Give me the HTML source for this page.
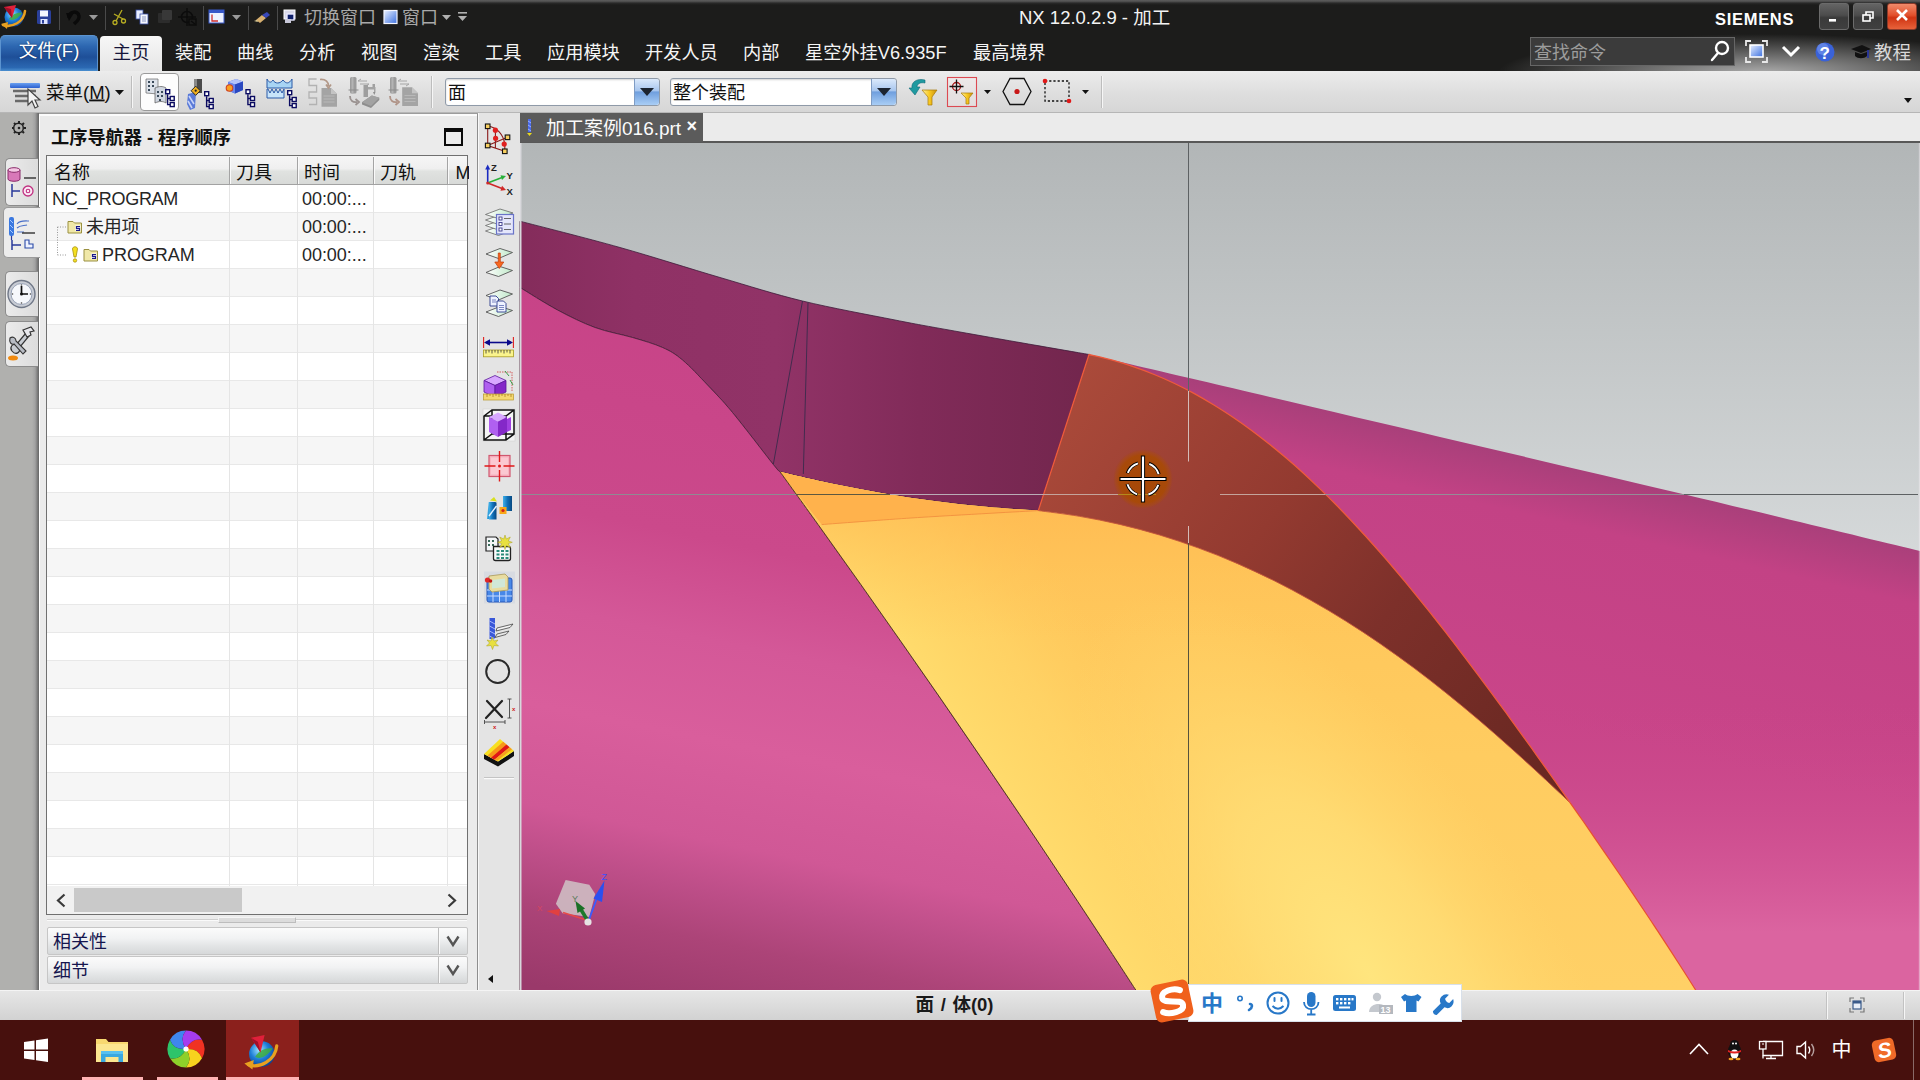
<!DOCTYPE html>
<html lang="zh-CN">
<head>
<meta charset="utf-8">
<title>NX 12.0.2.9 - 加工</title>
<style>
*{box-sizing:border-box;margin:0;padding:0}
html,body{width:1920px;height:1080px;overflow:hidden;background:#1b1b1b}
body{font-family:"Liberation Sans","Noto Sans CJK SC",sans-serif;position:relative;color:#222}
.abs{position:absolute}
svg{overflow:visible}
/* title bar */
#title{left:0;top:0;width:1920px;height:71px;background:#1c1c1b}
#topline{left:0;top:0;width:1920px;height:5px;background:linear-gradient(#5e5e5e,#4a4a4a 35%,#2a2a2a 60%,#1c1c1b)}
#glow{left:1400px;top:24px;width:520px;height:47px;overflow:hidden;background:radial-gradient(ellipse 265px 40px at 362px 50px,rgba(192,192,192,.9) 0,rgba(192,192,192,0) 100%)}
.tt{color:#f2f2f2;white-space:nowrap}
#apptitle{left:1019px;top:5px;font-size:18.5px;line-height:26px;color:#f4f4f4}
#siemens{left:1715px;top:8px;font-size:16.5px;line-height:22px;font-weight:bold;color:#fff;letter-spacing:.7px}
.wbtn{top:3px;height:27px;width:30px;border-radius:3px;border:1px solid #6b6b6b;background:linear-gradient(#646464,#4c4c4c 45%,#3a3a3a 55%,#404040)}
#filebtn{left:0;top:35px;width:98px;height:36px;border-radius:5px 5px 0 0;background:linear-gradient(#4a86c8,#2c66b0 30%,#1e4f98 60%,#2b68b2 90%,#4a8fd0);border:1px solid #5b93cf;border-bottom:none;color:#fff;font-size:18.5px;line-height:29px;text-align:center;text-shadow:0 0 2px rgba(0,0,30,.6)}
#hometab{left:100px;top:36px;width:62px;height:35px;border-radius:4px 4px 0 0;background:linear-gradient(#f7f7f7,#ececec 60%,#e6e6e6);color:#15153a;font-size:18.5px;line-height:34px;text-align:center}
.mi{top:36px;height:35px;line-height:34px;font-size:18.2px;color:#f5f5f5;white-space:nowrap}
#search{left:1530px;top:37px;width:205px;height:29px;background:#3b3b3b;border:1px solid #666;color:#9c9c9c;font-size:18px;line-height:30px;padding-left:3px}
/* toolbar */
#toolbar{left:0;top:71px;width:1920px;height:42px;background:linear-gradient(#ececec,#dedede 55%,#d6d6d6);border-bottom:1px solid #b6b6b6}
.sep{top:76px;width:2px;height:32px;background:linear-gradient(90deg,#bdbdbd 50%,#f6f6f6 50%)}
.combo{top:78px;height:28px;background:#fff;border:1px solid #8f9aa8;border-radius:3px;font-size:18px;line-height:28px;padding-left:2px;color:#111;box-shadow:inset 0 1px 2px rgba(0,0,0,.18)}
.combo i{position:absolute;right:0;top:0;width:25px;height:26px;border-left:1px solid #7f9cc4;border-radius:0 3px 3px 0;background:linear-gradient(#dbe9fb,#a8c6ee 45%,#6f9fde 50%,#a9cdf5)}
.combo i:after{content:"";position:absolute;left:5px;top:9px;border:7px solid transparent;border-top:8px solid #1c2430;border-bottom:none}
/* main */
#main{left:0;top:113px;width:1920px;height:877px;background:#e4e4e4}
#resbar{left:0;top:113px;width:39px;height:877px;background:linear-gradient(90deg,#b0b0ae 0,#b0b0ae 82%,#a2a2a2 90%,#7c7c7c 96%,#666 100%)}
#nav{left:39px;top:113px;width:439px;height:877px;background:#ebebeb;border-left:1.5px solid #fff;border-right:1px solid #8e8e8e}
#navtitle{left:51px;top:125px;font-size:18.2px;font-weight:bold;line-height:26px;color:#111;white-space:nowrap}
#tbl{left:46px;top:155px;width:422px;height:760px;background:#fff;border:1px solid #707070}
#vtb{left:478px;top:113px;width:42px;height:877px;background:#e4e4e4;border-left:1px solid #f8f8f8}
#tabstrip{left:520px;top:113px;width:1400px;height:30px;background:#ebebeb;border-bottom:2px solid #585858;z-index:2}
#doctab{left:520px;top:113px;width:183px;height:29px;z-index:3;background:#5b5b5b;color:#fbfbfb;font-size:19px;line-height:27px;white-space:nowrap}
/* status */
#status{left:0;top:990px;width:1920px;height:30px;background:linear-gradient(#e6e6e6,#dcdcdc 50%,#d2d2d2);border-top:1px solid #f4f4f4}
#stattext{left:915.5px;top:992px;font-size:18.5px;font-weight:bold;line-height:26px;word-spacing:1.5px;color:#1a1a1a;white-space:nowrap}
/* taskbar */
#taskbar{left:0;top:1020px;width:1920px;height:60px;background:#47100d}
.ul{top:1077px;height:3px;background:#ffb3b3}
</style>
</head>
<body>
<div id="title" class="abs"></div>
<div id="glow" class="abs"></div>
<div id="topline" class="abs"></div>
<!-- quick access icons -->
<svg class="abs" style="left:0;top:0" width="480" height="36" viewBox="0 0 480 36">
<defs>
<radialGradient id="nxg" cx="0.4" cy="0.35" r="0.7"><stop offset="0" stop-color="#8fe0ff"/><stop offset="0.5" stop-color="#1f7fd8"/><stop offset="1" stop-color="#0b3c8c"/></radialGradient>
<linearGradient id="blu" x1="0" y1="0" x2="1" y2="1"><stop offset="0" stop-color="#e8f0ff"/><stop offset="1" stop-color="#3a6fe0"/></linearGradient>
</defs>
<g id="nxlogo">
<circle cx="14" cy="17" r="9.5" fill="url(#nxg)"/>
<path d="M9 19 C12 14 18 12 22 13 C19 17 14 22 9 19Z" fill="#3fae3f" opacity=".85"/>
<polygon points="4,7 16,5 12,18" fill="#e0203a"/>
<polygon points="4,7 11,9 12,18" fill="#a01028"/>
<path d="M3 25 C12 28 24 22 25 11" fill="none" stroke="#e8a020" stroke-width="2.6" stroke-linecap="round"/>
<polygon points="1,24 8,22 7,29" fill="#e8a020"/>
</g>
<g><rect x="37" y="10" width="14" height="14" rx="1.5" fill="#2a3f9a"/><rect x="40" y="10.5" width="8" height="6" fill="#f4f6ff"/><rect x="40.5" y="19" width="7" height="5" fill="#dfe5ff"/><rect x="42" y="20" width="2" height="3.5" fill="#2a3f9a"/></g>
<path d="M59.5 6 V30 M105.5 6 V30 M203.5 6 V30 M248.5 6 V30 M277.5 6 V30" stroke="#4a4a4a" stroke-width="1"/>
<path d="M69 18 C69 11 78 10 79 16 C79.5 20 76 22 74 24" fill="none" stroke="#0a0a0a" stroke-width="3.4"/><polygon points="66,13 74,13 69,21" fill="#0a0a0a"/>
<polygon points="89,15 98,15 93.5,20" fill="#9a9a9a"/>
<g stroke="#b8ae22" stroke-width="1.300" fill="none"><path d="M122 10 L116 21 M114 14 L123 19"/><circle cx="115" cy="22.5" r="2"/><circle cx="123.5" cy="21" r="2"/></g>
<g><rect x="136" y="10" width="7" height="9" fill="#e8eeff" stroke="#3a50a8" stroke-width=".8"/><rect x="140" y="14" width="8" height="10" fill="#f4f7ff" stroke="#3a50a8" stroke-width=".8"/><path d="M142 17h4M142 19h4M142 21h4" stroke="#5a6aa8" stroke-width=".7"/></g>
<g fill="#2c2c2c"><rect x="158" y="13" width="12" height="10" rx="1"/><rect x="162" y="10" width="10" height="10" rx="1" fill="#383838"/></g>
<g stroke="#0c0c0c" stroke-width="1.5" fill="none"><circle cx="187" cy="17" r="5.5"/><path d="M187 8 V26 M178 17 H196"/><rect x="189" y="19" width="7" height="6" fill="#1c1c1b"/><path d="M191 21 l4 3"/></g>
<g><rect x="209" y="10" width="15" height="13" fill="#eef2ff" stroke="#3858c8" stroke-width="1"/><rect x="209" y="10" width="15" height="3" fill="#3858c8"/><path d="M212 14.5 V21 H218" stroke="#d03030" stroke-width="1.3" fill="none"/></g>
<polygon points="232,15 241,15 236.5,20" fill="#9a9a9a"/>
<g><path d="M256 20 L262 15 L266 18 L260 23Z" fill="#d8b070"/><path d="M262 15 L267 12 L270 15 L266 18Z" fill="#3848b8"/><path d="M254 21 l3 -1 l1 2z" fill="#e8d8a0"/></g>
<g><rect x="284" y="10" width="11" height="9" fill="#d8d8e8" stroke="#ffffff" stroke-width="1"/><rect x="287" y="14" width="7" height="6" fill="#10206a" stroke="#e8e8ff" stroke-width="1.4"/><rect x="285" y="19" width="6" height="4" fill="#c8c8d8"/></g>
<text x="304" y="24" font-family="Liberation Sans, Noto Sans CJK SC, sans-serif" font-size="18" fill="#a9a9a9">切换窗口</text>
<g><rect x="384" y="10.5" width="13" height="13" fill="url(#blu)" stroke="#f4f6ff" stroke-width="1.2"/></g>
<text x="402" y="24" font-family="Liberation Sans, Noto Sans CJK SC, sans-serif" font-size="18" fill="#a9a9a9">窗口</text>
<polygon points="442,15 451,15 446.5,20" fill="#b0b0b0"/>
<polygon points="458,16 467,16 462.5,21" fill="#b0b0b0"/><rect x="458" y="12" width="9" height="1.6" fill="#b0b0b0"/>
</svg>
<div id="apptitle" class="abs tt">NX 12.0.2.9 - 加工</div>
<div id="siemens" class="abs tt">SIEMENS</div>
<div class="abs wbtn" style="left:1819px"></div>
<div class="abs wbtn" style="left:1853px"></div>
<div class="abs wbtn" style="left:1887px;background:linear-gradient(#f08a6a,#e2502c 45%,#cf3413 55%,#e8623a);border-color:#8a3a2a"></div>
<svg class="abs" style="left:1819px;top:3px" width="100" height="27" viewBox="0 0 100 27">
<rect x="10" y="16" width="7" height="2.6" fill="#fff"/>
<g fill="none" stroke="#fff" stroke-width="1.6"><rect x="44" y="12" width="7" height="6"/><path d="M47 12 V9 H54 V15 H51"/></g>
<path d="M78 7 L88 17 M88 7 L78 17" stroke="#fff" stroke-width="2.6"/>
</svg>
<div id="filebtn" class="abs">文件(F)</div>
<div id="hometab" class="abs">主页</div>
<div class="abs mi" style="left:175px">装配</div>
<div class="abs mi" style="left:237px">曲线</div>
<div class="abs mi" style="left:299px">分析</div>
<div class="abs mi" style="left:361px">视图</div>
<div class="abs mi" style="left:423px">渲染</div>
<div class="abs mi" style="left:485px">工具</div>
<div class="abs mi" style="left:547px">应用模块</div>
<div class="abs mi" style="left:645px">开发人员</div>
<div class="abs mi" style="left:743px">内部</div>
<div class="abs mi" style="left:805px">星空外挂V6.935F</div>
<div class="abs mi" style="left:973px">最高境界</div>
<div id="search" class="abs">查找命令</div>
<svg class="abs" style="left:1700px;top:36px" width="220" height="34" viewBox="1700 36 220 34">
<g fill="none" stroke="#fff" stroke-width="2.4"><circle cx="1722" cy="48" r="6"/><path d="M1718 53 L1712 60" stroke-linecap="round"/></g>
<g><rect x="1750" y="45" width="13" height="12" fill="url(#blu)" stroke="#fff" stroke-width="1.6"/><path d="M1746 46 V41 H1751 M1762 41 H1767 V46 M1767 57 V62 H1762 M1751 62 H1746 V57" fill="none" stroke="#e8e8e8" stroke-width="1.8"/></g>
<path d="M1783 47 L1791 55 L1799 47" fill="none" stroke="#fff" stroke-width="3"/>
<circle cx="1825" cy="52" r="9.5" fill="#3a62d8"/><circle cx="1823" cy="49" r="6" fill="#7a9af0" opacity=".6"/>
<text x="1819.5" y="58.5" font-family="Liberation Sans, sans-serif" font-weight="bold" font-size="17" fill="#fff">?</text>
<g><polygon points="1851,49 1862,45 1871,49 1861,53" fill="#111"/><path d="M1855 52 V56 C1858 59 1864 59 1867 56 V52 L1861 54Z" fill="#111"/><path d="M1868 50 V58" stroke="#2030a8" stroke-width="1.6"/></g>
<text x="1874" y="59" font-family="Liberation Sans, Noto Sans CJK SC, sans-serif" font-size="18.5" fill="#d8d8d8">教程</text>
</svg>
<div id="toolbar" class="abs"></div>
<div class="abs sep" style="left:131px"></div>
<div class="abs sep" style="left:431px"></div>
<div class="abs sep" style="left:1101px"></div>
<div class="abs" style="left:140px;top:73px;width:39px;height:38px;background:#fdfdfd;border:1px solid #9a9a9a;border-radius:4px"></div>
<svg class="abs" style="left:0;top:71px" width="440" height="42" viewBox="0 71 440 42">
<defs>
<linearGradient id="mg" x1="0" y1="0" x2="0" y2="1"><stop offset="0" stop-color="#6aa0f0"/><stop offset="1" stop-color="#2a5fd0"/></linearGradient>
<g id="tree" fill="#fff" stroke="#0a0a60" stroke-width="1.6" transform="scale(.87)"><path d="M3 6 V18 H6 M3 11 H6" fill="none"/><rect x="0.8" y="0.8" width="4.6" height="4.6"/><rect x="6" y="8.6" width="4.6" height="4.6"/><rect x="6" y="15.6" width="4.6" height="4.6"/></g>
</defs>
<!-- menu icon -->
<g><rect x="10" y="83" width="30" height="5" rx="1" fill="url(#mg)"/><path d="M13 91 H36 M15 96 H36 M15 101 H30" stroke="#6a6a6a" stroke-width="2.4"/><path d="M28 89 L28 105 L32 101 L35 108 L38 106.5 L35 100 L40 100Z" fill="#f4f4f4" stroke="#444" stroke-width="1.2"/></g>
<text x="46" y="98.5" font-family="Liberation Sans, Noto Sans CJK SC, sans-serif" font-size="18.5" fill="#111">菜单(<tspan text-decoration="underline">M</tspan>)</text>
<polygon points="115,90 124,90 119.5,95" fill="#111"/>
<!-- icon1 -->
<g><path d="M146 79 L158 79 L158 94 L146 93Z" fill="#dde2ea" stroke="#777" stroke-width=".8"/><path d="M155 88 C159 86 163 86 166 88 L166 103 C163 101 159 101 155 103Z" fill="#d0d6e0" stroke="#666" stroke-width=".8"/><g fill="#3a4a5a"><rect x="148" y="81" width="2" height="2"/><rect x="152" y="81" width="2" height="2"/><rect x="148" y="85" width="2" height="2"/><rect x="152" y="85" width="2" height="2"/><rect x="148" y="89" width="2" height="2"/><rect x="157" y="91" width="2" height="2"/><rect x="161" y="91" width="2" height="2"/><rect x="157" y="95" width="2" height="2"/><rect x="161" y="95" width="2" height="2"/><rect x="159" y="99" width="2" height="2"/></g><use href="#tree" x="165" y="89"/></g>
<!-- icon2 drill -->
<g><rect x="194" y="79" width="8" height="14" fill="#4a4a4a"/><rect x="194" y="79" width="3" height="14" fill="#888"/><path d="M188 94 L196 92 L195 108 L190 110 L187 104Z" fill="#5a7ad8"/><path d="M189 96 L194 104 M188 101 L192 108" stroke="#c8d4f8" stroke-width="1.6"/><rect x="192.5" y="87.5" width="6.5" height="6.5" transform="rotate(45 195.7 90.7)" fill="#f0b020" stroke="#222" stroke-width=".9"/><circle cx="195.7" cy="90.7" r="1.1" fill="#222"/><use href="#tree" x="204" y="91"/></g>
<!-- icon3 cube -->
<g><path d="M228 82 L236 79 L243 81.500 L243 90 L235 93.500 L228 90.500Z" fill="#4a6ae0"/><path d="M228 82 L236 79 L243 81.500 L235 84.500Z" fill="#b4c4fa"/><path d="M235 84.500 L243 81.500 L243 90 L235 93.500Z" fill="#2a48c0"/><path d="M228 82 L235 84.500 L235 93.500 L228 90.500Z" fill="#6a86ec"/><circle cx="229.500" cy="88" r="3.300" fill="#f8a020" stroke="#d04020" stroke-width="1.100"/><use href="#tree" x="245.300" y="89"/></g>
<!-- icon4 wave -->
<g><path d="M267 79 V88 H292 V79 C289 84 286 84 283 80 C280 84 275 84 273 80 C271 83 269 83 267 79Z" fill="#a8d4f4" stroke="#2a5aa8" stroke-width="1"/><path d="M267 89 V98 H284 V89 L282 93 L280 89 L278 93 L276 89 L274 93 L272 89 L270 93 L268 89Z" fill="#c8e4fa" stroke="#2a5aa8" stroke-width="1"/><use href="#tree" x="287" y="90"/></g>
<!-- gray icons -->
<g>
<path d="M316.600 79 H309 V85.500 H316.600 V92 H309 V98 H316.600 V104.500 H309" fill="none" stroke="#b2b2b2" stroke-width="1.300"/>
<path d="M321.500 88 H331 L337 94 V106.800 H321.500Z" fill="#a4a4a4"/><path d="M331 88 V94 H337Z" fill="#c4c4c4"/>
<path d="M323.500 96 h11 M323.500 99 h11 M323.500 102 h11" stroke="#b8b8b8" stroke-width="1"/>
<path d="M320 79.500 C326 79 328.500 82 328.500 86 M326 84.500 L328.500 88 L331 84.500" fill="none" stroke="#b29888" stroke-width="1.700"/>
<rect x="350" y="77" width="6.500" height="16.500" rx="1.500" fill="#9c9c9c"/><rect x="351.500" y="77" width="2" height="16.500" fill="#b4b4b4"/>
<path d="M348.500 90 h10" stroke="#8c8c8c" stroke-width="1"/>
<path d="M358 81 l3 -2 M358 81 h9 M360 84 h9 M369 84 l-3 2" stroke="#a6a6a6" stroke-width="1" fill="none"/>
<rect x="363.500" y="85" width="4.500" height="12" fill="#9e9e9e"/><path d="M368 87 H375.500 V92 H374 V89.500 H368Z" fill="#a4a4a4"/><rect x="372.500" y="84" width="2.500" height="3" fill="#a0a0a0"/><path d="M373 92 h2.500 l-1.200 3z" fill="#8c8c8c"/>
<polygon points="362,102.300 371.800,95.500 379.300,97.800 379.300,100 371,108 362,104.500" fill="#8e8e8e"/><polygon points="362,102.300 371.800,95.500 379.300,97.800 371,106" fill="#a2a2a2"/>
<path d="M350 96 C350 101 353 102.500 357 102 M355.500 99 L359 102 L355.500 105" fill="none" stroke="#9a9290" stroke-width="1.800"/>
<rect x="390" y="77" width="6.500" height="16.500" rx="1.500" fill="#9c9c9c"/><rect x="391.500" y="77" width="2" height="16.500" fill="#b4b4b4"/>
<path d="M388.500 90 h10" stroke="#8c8c8c" stroke-width="1"/>
<path d="M398 81 l3 -2 M398 81 h9 M400 84 h9 M409 84 l-3 2" stroke="#a6a6a6" stroke-width="1" fill="none"/>
<path d="M402.200 87.300 H412 L418 93.300 V106 H402.200Z" fill="#a4a4a4"/><path d="M412 87.300 V93.300 H418Z" fill="#c4c4c4"/>
<path d="M404.500 95.500 h11 M404.500 98.500 h11 M404.500 101.500 h11" stroke="#b8b8b8" stroke-width="1"/>
<path d="M390 96 C390 101 393 102.500 397 102 M395.500 99 L399 102 L395.500 105" fill="none" stroke="#b09488" stroke-width="1.800"/>
</g>
</svg>
<div class="abs combo" style="left:445px;width:215px">面<i></i></div>
<div class="abs combo" style="left:670px;width:227px">整个装配<i></i></div>
<svg class="abs" style="left:900px;top:71px" width="220" height="42" viewBox="900 71 220 42">
<defs><linearGradient id="fun" x1="0" y1="0" x2="1" y2="0"><stop offset="0" stop-color="#fff2a0"/><stop offset=".5" stop-color="#f8c820"/><stop offset="1" stop-color="#c89010"/></linearGradient></defs>
<path d="M925 80 C917 78 911 82 912 88 L909 88 L915 95 L920 87 L917 87 C917 84 920 82 925 83Z" fill="#1f9aa0" stroke="#0f6a78" stroke-width=".6"/>
<path d="M922 90 H937 L932 97 V105 L928 105 V97Z" fill="url(#fun)" stroke="#a87808" stroke-width=".7"/>
<rect x="947.500" y="77.500" width="29" height="29" fill="rgba(255,240,240,.25)" stroke="#dc4a52" stroke-width="1.100"/>
<g stroke-width="1.300" fill="none"><circle cx="956.500" cy="86.500" r="4" stroke="#a81818"/><path d="M956.500 79.500 V93.500 M949.500 86.500 H963.500" stroke="#111"/></g>
<path d="M961 93 H973 L969 98 V104 L966 104 V98Z" fill="url(#fun)" stroke="#a87808" stroke-width=".7"/>
<polygon points="984,90 991,90 987.5,94" fill="#111"/>
<polygon points="1003,91.500 1010,78.500 1024,78.500 1031,91.500 1024,104.500 1010,104.500" fill="none" stroke="#111" stroke-width="1.300"/><circle cx="1017" cy="91.500" r="2.600" fill="#c81818"/>
<rect x="1045" y="81" width="24" height="20" fill="none" stroke="#111" stroke-width="1.300" stroke-dasharray="2.200 2"/><circle cx="1045" cy="81" r="2.300" fill="#e01818"/><circle cx="1069" cy="101" r="2.300" fill="#e01818"/>
<polygon points="1082,90 1089,90 1085.5,94" fill="#111"/>
</svg>
<svg class="abs" style="left:1901px;top:95.5px" width="14" height="10"><polygon points="3,2 11,2 7,7" fill="#111"/></svg>
<div id="main" class="abs"></div>
<div id="resbar" class="abs"></div>
<div id="nav" class="abs"></div>
<div class="abs" style="left:5px;top:158px;width:33px;height:48px;background:linear-gradient(90deg,#ebebeb,#dcdcdc);border:1px solid #8c8c8c;border-right:none;border-radius:5px 0 0 5px"></div>
<div class="abs" style="left:3px;top:207px;width:37px;height:51px;background:#ececec;border:1px solid #9a9a9a;border-right:none;border-radius:5px 0 0 5px"></div>
<div class="abs" style="left:5px;top:271px;width:33px;height:46px;background:linear-gradient(90deg,#ebebeb,#dcdcdc);border:1px solid #8c8c8c;border-right:none;border-radius:5px 0 0 5px"></div>
<div class="abs" style="left:5px;top:321px;width:33px;height:46px;background:linear-gradient(90deg,#ebebeb,#dcdcdc);border:1px solid #8c8c8c;border-right:none;border-radius:5px 0 0 5px"></div>
<svg class="abs" style="left:0;top:113px" width="40" height="260" viewBox="0 113 40 260">
<g fill="none" stroke="#222" stroke-width="1.5"><circle cx="18.500" cy="128" r="4.800"/><path d="M19 121 v2 M19 133 v2 M12 128 h2 M24 128 h2 M14 123 l1.500 1.500 M22.500 131.500 l1.500 1.500 M24 123 l-1.500 1.500 M15.500 131.500 l-1.500 1.500" stroke-width="2"/></g>
<circle cx="19" cy="128" r="1.300" fill="#222"/>
<!-- tab1 -->
<g><path d="M8 170 V179 C8 182 20 182 20 179 V170Z" fill="#d878b8" stroke="#8a2a6a" stroke-width="1"/><ellipse cx="14" cy="170" rx="6" ry="2.300" fill="#f4c8e4" stroke="#8a2a6a" stroke-width="1"/><path d="M24 178 H36" stroke="#222" stroke-width="1.300"/><path d="M12 184 V197 M12 191 H20" stroke="#2a3a9a" stroke-width="1.500" fill="none"/><circle cx="28" cy="191" r="5" fill="#fbe8f4" stroke="#c03080" stroke-width="1.300"/><circle cx="28" cy="191" r="1.800" fill="none" stroke="#c03080" stroke-width="1.100"/></g>
<!-- tab2 -->
<g><rect x="9" y="217" width="5" height="19" rx="2" fill="#3a78e0"/><path d="M10 220 l3 3 M10 225 l3 3 M10 230 l3 3" stroke="#a8c8ff" stroke-width="1"/><path d="M11.500 236 V240" stroke="#2a3a9a" stroke-width="1.200"/><path d="M17 224 C20 220 26 221 29 221 M17 228 C20 225 24 226 27 225 M17 232 H24" stroke="#4a70c8" stroke-width="1.100" fill="none"/><path d="M22 233 H35" stroke="#222" stroke-width="1.300"/><path d="M12 240 V250 M12 245 H21" stroke="#2a3a9a" stroke-width="1.500" fill="none"/><path d="M25 240 H29 V244 H33 V248 H25Z" fill="#eef2ff" stroke="#2a4aa8" stroke-width="1.100"/></g>
<!-- clock -->
<g><circle cx="21.500" cy="294" r="13.500" fill="#c8ccd4" stroke="#707888" stroke-width="1.400"/><circle cx="21.500" cy="294" r="10.500" fill="#f6f8fc" stroke="#9aa4b8" stroke-width="1"/><path d="M21.500 294 V286 M21.500 294 H28" stroke="#111" stroke-width="1.700"/><circle cx="21.500" cy="294" r="1.500" fill="#111"/><g fill="#444"><circle cx="21.500" cy="285" r=".8"/><circle cx="21.500" cy="303" r=".8"/><circle cx="12.500" cy="294" r=".8"/><circle cx="30.500" cy="294" r=".8"/></g></g>
<!-- tools -->
<g><path d="M12 351 C9 347 13 343 16 345 L26 333 L29 336 L19 348 C21 352 16 356 12 351Z" fill="#c8ccd2" stroke="#333" stroke-width="1.200"/><path d="M23 330 L31 327 L34 331 L30 332 L31 335 L27 337Z" fill="#e8e8ec" stroke="#333" stroke-width="1.200"/><path d="M10 338 C13 336 16 338 16 341 L26 351 L23 354 L14 344 C11 345 9 342 10 338Z" fill="#b8bcc4" stroke="#333" stroke-width="1.100"/><ellipse cx="13" cy="358" rx="5" ry="2.500" fill="#f08a10"/></g>
</svg>
<div id="navtitle" class="abs">工序导航器 - 程序顺序</div>
<div class="abs" style="left:444px;top:128px;width:19px;height:18px;border:2px solid #0a0a0a;border-top-width:4.5px"></div>
<div class="abs" style="left:39px;top:113px;width:439px;height:1px;background:#9c9c9c"></div>
<div class="abs" style="left:40px;top:114px;width:437px;height:1.5px;background:#fbfbfb"></div>
<div id="tbl" class="abs"></div>
<div class="abs" style="left:47px;top:156px;width:420px;height:29px;background:linear-gradient(#f6f6f6,#efefef 45%,#e0e2e0 55%,#d8dad8);border-bottom:1px solid #a2a2a2"></div>
<div class="abs" style="left:47px;top:185px;width:420px;height:28px;background:#ffffff;border-bottom:1px solid #e8e8e8"></div>
<div class="abs" style="left:47px;top:213px;width:420px;height:28px;background:#f6f6f6;border-bottom:1px solid #e8e8e8"></div>
<div class="abs" style="left:47px;top:241px;width:420px;height:28px;background:#ffffff;border-bottom:1px solid #e8e8e8"></div>
<div class="abs" style="left:47px;top:269px;width:420px;height:28px;background:#f6f6f6;border-bottom:1px solid #e8e8e8"></div>
<div class="abs" style="left:47px;top:297px;width:420px;height:28px;background:#ffffff;border-bottom:1px solid #e8e8e8"></div>
<div class="abs" style="left:47px;top:325px;width:420px;height:28px;background:#f6f6f6;border-bottom:1px solid #e8e8e8"></div>
<div class="abs" style="left:47px;top:353px;width:420px;height:28px;background:#ffffff;border-bottom:1px solid #e8e8e8"></div>
<div class="abs" style="left:47px;top:381px;width:420px;height:28px;background:#f6f6f6;border-bottom:1px solid #e8e8e8"></div>
<div class="abs" style="left:47px;top:409px;width:420px;height:28px;background:#ffffff;border-bottom:1px solid #e8e8e8"></div>
<div class="abs" style="left:47px;top:437px;width:420px;height:28px;background:#f6f6f6;border-bottom:1px solid #e8e8e8"></div>
<div class="abs" style="left:47px;top:465px;width:420px;height:28px;background:#ffffff;border-bottom:1px solid #e8e8e8"></div>
<div class="abs" style="left:47px;top:493px;width:420px;height:28px;background:#f6f6f6;border-bottom:1px solid #e8e8e8"></div>
<div class="abs" style="left:47px;top:521px;width:420px;height:28px;background:#ffffff;border-bottom:1px solid #e8e8e8"></div>
<div class="abs" style="left:47px;top:549px;width:420px;height:28px;background:#f6f6f6;border-bottom:1px solid #e8e8e8"></div>
<div class="abs" style="left:47px;top:577px;width:420px;height:28px;background:#ffffff;border-bottom:1px solid #e8e8e8"></div>
<div class="abs" style="left:47px;top:605px;width:420px;height:28px;background:#f6f6f6;border-bottom:1px solid #e8e8e8"></div>
<div class="abs" style="left:47px;top:633px;width:420px;height:28px;background:#ffffff;border-bottom:1px solid #e8e8e8"></div>
<div class="abs" style="left:47px;top:661px;width:420px;height:28px;background:#f6f6f6;border-bottom:1px solid #e8e8e8"></div>
<div class="abs" style="left:47px;top:689px;width:420px;height:28px;background:#ffffff;border-bottom:1px solid #e8e8e8"></div>
<div class="abs" style="left:47px;top:717px;width:420px;height:28px;background:#f6f6f6;border-bottom:1px solid #e8e8e8"></div>
<div class="abs" style="left:47px;top:745px;width:420px;height:28px;background:#ffffff;border-bottom:1px solid #e8e8e8"></div>
<div class="abs" style="left:47px;top:773px;width:420px;height:28px;background:#f6f6f6;border-bottom:1px solid #e8e8e8"></div>
<div class="abs" style="left:47px;top:801px;width:420px;height:28px;background:#ffffff;border-bottom:1px solid #e8e8e8"></div>
<div class="abs" style="left:47px;top:829px;width:420px;height:28px;background:#f6f6f6;border-bottom:1px solid #e8e8e8"></div>
<div class="abs" style="left:47px;top:857px;width:420px;height:28px;background:#ffffff;border-bottom:1px solid #e8e8e8"></div>
<div class="abs" style="left:229px;top:157px;width:1px;height:27px;background:#a4a4a4;box-shadow:1px 0 0 #fafafa"></div>
<div class="abs" style="left:229px;top:185px;width:1px;height:701px;background:#e5e5e5"></div>
<div class="abs" style="left:297px;top:157px;width:1px;height:27px;background:#a4a4a4;box-shadow:1px 0 0 #fafafa"></div>
<div class="abs" style="left:297px;top:185px;width:1px;height:701px;background:#e5e5e5"></div>
<div class="abs" style="left:373px;top:157px;width:1px;height:27px;background:#a4a4a4;box-shadow:1px 0 0 #fafafa"></div>
<div class="abs" style="left:373px;top:185px;width:1px;height:701px;background:#e5e5e5"></div>
<div class="abs" style="left:447px;top:157px;width:1px;height:27px;background:#a4a4a4;box-shadow:1px 0 0 #fafafa"></div>
<div class="abs" style="left:447px;top:185px;width:1px;height:701px;background:#e5e5e5"></div>
<div class="abs" style="left:54px;top:159.5px;font-size:18px;line-height:27px;color:#111;white-space:nowrap">名称</div>
<div class="abs" style="left:236px;top:159.5px;font-size:18px;line-height:27px;color:#111;white-space:nowrap">刀具</div>
<div class="abs" style="left:304px;top:159.5px;font-size:18px;line-height:27px;color:#111;white-space:nowrap">时间</div>
<div class="abs" style="left:380px;top:159.5px;font-size:18px;line-height:27px;color:#111;white-space:nowrap">刀轨</div>
<div class="abs" style="left:455.5px;top:159.5px;font-size:18px;line-height:27px;color:#111;white-space:nowrap;width:13px;overflow:hidden">M</div>
<div class="abs" style="left:52px;top:186px;font-size:18px;line-height:27px;color:#262626;white-space:nowrap;letter-spacing:-.3px">NC_PROGRAM</div>
<div class="abs" style="left:86px;top:214px;font-size:18px;line-height:27px;color:#262626;white-space:nowrap;letter-spacing:-.3px">未用项</div>
<div class="abs" style="left:102px;top:242px;font-size:18px;line-height:27px;color:#262626;white-space:nowrap;letter-spacing:-.05px">PROGRAM</div>
<div class="abs" style="left:302px;top:186px;font-size:18px;line-height:27px;color:#262626;white-space:nowrap;letter-spacing:-.05px">00:00:...</div>
<div class="abs" style="left:302px;top:214px;font-size:18px;line-height:27px;color:#262626;white-space:nowrap;letter-spacing:-.05px">00:00:...</div>
<div class="abs" style="left:302px;top:242px;font-size:18px;line-height:27px;color:#262626;white-space:nowrap;letter-spacing:-.05px">00:00:...</div>
<svg class="abs" style="left:47px;top:185px" width="70" height="84" viewBox="47 185 70 84">
<path d="M57.500 227 V255 M57.500 227 H66 M57.500 255 H66" stroke="#999" stroke-width="1" stroke-dasharray="1 1.500" fill="none"/>
<g id="fold"><path d="M68 221.500 H73 L74.500 223 H81.500 V233 H68Z" fill="#f0e8a8" stroke="#9a9040" stroke-width="1"/><rect x="75.500" y="225.500" width="5" height="5.500" fill="#fff"/><path d="M80 226.500 H76.500 V228.300 H79.500 V230.300 H76" fill="none" stroke="#1a1a8a" stroke-width="1.200"/></g>
<use href="#fold" x="16" y="28"/>
<path d="M72.500 249 C72.500 246 77.500 246 77.500 249 L76 257 H74Z" fill="#f4e020" stroke="#a89010" stroke-width=".8"/><circle cx="75" cy="260.500" r="1.700" fill="#f4e020" stroke="#a89010" stroke-width=".8"/>
</svg>
<div class="abs" style="left:47px;top:886px;width:420px;height:28px;background:#f1f1f1"></div>
<div class="abs" style="left:74px;top:888px;width:168px;height:24px;background:#c9c9c9"></div>
<svg class="abs" style="left:47px;top:886px" width="420" height="28" viewBox="47 886 420 28"><path d="M64.500 894.500 L58 900.500 L64.500 906.500 M448.500 894.500 L455 900.500 L448.500 906.500" fill="none" stroke="#3a3a3a" stroke-width="2.200"/></svg>
<div class="abs" style="left:47px;top:919px;width:420px;height:2px;background:linear-gradient(#cfcfcf 50%,#fafafa 50%)"></div>
<div class="abs" style="left:218px;top:917px;width:78px;height:6px;background:#dcdcdc;border:1px solid #bdbdbd;border-top-color:#f4f4f4;border-left-color:#f4f4f4"></div>
<div class="abs" style="left:47px;top:927px;width:421px;height:28px;background:linear-gradient(#fbfbfb,#f1f2f3 40%,#e2e4e5 70%,#d6d8d9);border:1px solid #c6c6c6;border-radius:2px;font-size:18px;line-height:29.5px;color:#15154e;padding-left:5px;overflow:hidden">相关性</div>
<div class="abs" style="left:438px;top:928px;width:1px;height:26px;background:#bdbdbd;box-shadow:1px 0 0 #fafafa"></div>
<div class="abs" style="left:47px;top:956px;width:421px;height:28px;background:linear-gradient(#fbfbfb,#f1f2f3 40%,#e2e4e5 70%,#d6d8d9);border:1px solid #c6c6c6;border-radius:2px;font-size:18px;line-height:29.5px;color:#15154e;padding-left:5px;overflow:hidden">细节</div>
<div class="abs" style="left:438px;top:957px;width:1px;height:26px;background:#bdbdbd;box-shadow:1px 0 0 #fafafa"></div>
<svg class="abs" style="left:440px;top:927px" width="28" height="58" viewBox="440 927 28 58"><path d="M447.500 936.500 L453 945 L458.500 936.500 M447.500 965.500 L453 974 L458.500 965.500" fill="none" stroke="#555" stroke-width="2.400"/></svg><div id="vtb" class="abs"></div>
<div id="tabstrip" class="abs"></div>
<div id="doctab" class="abs"><span style="position:absolute;left:26px;top:1.5px">加工案例016.prt</span><span style="position:absolute;left:166.5px;top:0;font-weight:bold;font-size:18px">×</span></div>
<svg class="abs" style="left:524px;top:117px;z-index:4" width="12" height="22" viewBox="0 0 12 22"><rect x="4" y="2" width="3" height="13" fill="#4a6ae8"/><path d="M4 4l3 2M4 8l3 2M4 12l3 2" stroke="#b8c8ff" stroke-width=".8"/><path d="M3 16 h5 l-2.500 3z" fill="#e8d820"/></svg>
<svg class="abs" style="left:478px;top:113px" width="42" height="877" viewBox="478 113 42 877">
<defs>
<linearGradient id="pur" x1="0" y1="0" x2="1" y2="1"><stop offset="0" stop-color="#d8a0ff"/><stop offset=".5" stop-color="#a040e0"/><stop offset="1" stop-color="#7020b0"/></linearGradient>
<linearGradient id="sheet" x1="0" y1="0" x2="1" y2="0"><stop offset="0" stop-color="#ffffff"/><stop offset="1" stop-color="#bfe8c8"/></linearGradient>
<linearGradient id="cyl" x1="0" y1="0" x2="1" y2="0"><stop offset="0" stop-color="#40b0e8"/><stop offset=".5" stop-color="#1070b8"/><stop offset="1" stop-color="#084880"/></linearGradient>
</defs>
<g>
<path d="M487.700 126.300 V145.500 L504.800 151.300 V144 M487.700 145.500 L507.500 137.300 M487.700 126.300 C497 127 504 135 504.500 144 M495.400 130 V148" fill="none" stroke="#8a1a1a" stroke-width="1.100"/>
<g fill="#e02020"><circle cx="495.400" cy="130.200" r="2.600"/><circle cx="495.600" cy="138.300" r="2.600"/><circle cx="504.200" cy="144.100" r="2.600"/></g>
<g fill="#f8d060" stroke="#111" stroke-width="1.100"><rect x="485.400" y="124" width="4.600" height="4.600"/><rect x="505.200" y="135" width="4.600" height="4.600"/><rect x="485.400" y="143.200" width="4.600" height="4.600"/><rect x="502.500" y="149" width="4.600" height="4.600"/></g>
</g>
<g>
<path d="M487.700 183 V168" stroke="#1a2ac0" stroke-width="1.600"/><polygon points="487.700,164.500 485.200,169.500 490.200,169.500" fill="#1a2ac0"/>
<path d="M487.700 183 L502 177.500" stroke="#28b038" stroke-width="1.600"/><polygon points="506,176 500.500,175.300 502,180" fill="#28b038"/>
<path d="M487.700 183 L502 188.500" stroke="#d02828" stroke-width="1.600"/><polygon points="506,190 502,185.800 500.500,190.800" fill="#d02828"/>
<circle cx="487.700" cy="183" r="1.500" fill="#d02828"/>
<g font-family="Liberation Sans, sans-serif" font-weight="bold" font-size="9.500" fill="#222"><text x="491" y="171">Z</text><text x="506.500" y="178.500">Y</text><text x="506.500" y="194.500">X</text></g>
</g>
<g>
<g fill="url(#sheet)" stroke="#666" stroke-width=".8"><polygon points="485.500,231 500,226 513,230 498.500,235.500"/><polygon points="485.500,225.500 500,220.500 513,224.500 498.500,230"/><polygon points="485.500,220 500,215 513,219 498.500,224.500"/><polygon points="485.500,214.500 500,209 513,213 498.500,218.500"/></g>
<rect x="496.500" y="214.500" width="17" height="19.500" fill="#e4e6fb" stroke="#6a74c8" stroke-width="1.200"/>
<g fill="#fff" stroke="#3a3a8a" stroke-width=".9"><rect x="499" y="217" width="3" height="3"/><rect x="499" y="222.500" width="3" height="3"/><rect x="499" y="228" width="3" height="3"/></g>
<path d="M504 218.500 h7 M504 224 h7 M504 229.500 h7" stroke="#555" stroke-width=".9"/>
</g>
<g>
<polygon points="486,272.500 500,266.500 512.500,270.500 498.500,276.500" fill="url(#sheet)" stroke="#555" stroke-width=".9"/>
<polygon points="486,254 500,248.500 512.500,252.500 498.500,258.500" fill="url(#sheet)" stroke="#555" stroke-width=".9"/>
<path d="M498.300 253 V262 H494.800 L499.300 268.500 L503.800 262 H500.300 V253Z" fill="#f86820" stroke="#c03808" stroke-width=".7"/>
</g>
<g>
<polygon points="486,312 500,306.500 512.500,310.500 498.500,316.500" fill="url(#sheet)" stroke="#555" stroke-width=".9"/>
<polygon points="486,295.500 500,290 512.500,294 498.500,300" fill="url(#sheet)" stroke="#555" stroke-width=".9"/>
<g fill="#eef2ff" stroke="#2a3a8a" stroke-width=".9"><path d="M490 296 H496 L498.500 298.500 V306 H490Z"/><path d="M497 301 H503.500 L506 303.500 V312 H497Z"/></g>
<path d="M499 305.500 h5 M499 307.500 h5 M499 309.500 h5 M492 300 h4 M492 302 h4" stroke="#4a5aa8" stroke-width=".7"/>
</g>
<g>
<path d="M486 342.500 H511" stroke="#0a0a8a" stroke-width="1.600"/><polygon points="484,342.500 490,339.300 490,345.700" fill="#0a0a8a"/><polygon points="513,342.500 507,339.300 507,345.700" fill="#0a0a8a"/>
<path d="M483.600 337 V348 M513.400 337 V348" stroke="#e02020" stroke-width="1.100"/>
<rect x="483.500" y="350" width="30" height="6.800" fill="#faf48c" stroke="#a89c20" stroke-width=".8"/>
<path d="M486 350 v3.500 M489 350 v2.500 M492 350 v3.500 M495 350 v2.500 M498 350 v3.500 M501 350 v2.500 M504 350 v3.500 M507 350 v2.500 M510 350 v3.500" stroke="#333" stroke-width=".8"/>
</g>
<g>
<path d="M497 372 H512 V392" fill="none" stroke="#d05050" stroke-width=".9" stroke-dasharray="1.500 1"/><path d="M505 371 l4 5 M510 380 l3 5" stroke="#38a048" stroke-width="1"/>
<polygon points="484,380.500 495,375.500 506,380.500 495,385.500" fill="#d8a8ff" stroke="#5a189a" stroke-width=".8"/>
<polygon points="484,380.500 495,385.500 495,397.500 484,392" fill="#b060f0" stroke="#5a189a" stroke-width=".8"/>
<polygon points="495,385.500 506,380.500 506,392 495,397.500" fill="#8428c8" stroke="#5a189a" stroke-width=".8"/>
<rect x="483.500" y="394" width="30" height="6" fill="#f4d870" stroke="#b89828" stroke-width=".7"/><path d="M487 394v3M490 394v2M493 394v3M496 394v2M499 394v3M502 394v2M505 394v3M508 394v2M511 394v3" stroke="#a07818" stroke-width=".7"/>
</g>
<g>
<rect x="483" y="409" width="32" height="32" fill="#f4f4f4" stroke="#cfcfcf" stroke-width=".6"/>
<path d="M484 416 L492 410 H514 V434 L506 440 H484Z M484 416 H506 V440 M506 416 L514 410 M484 440 L492 434 H514 M492 410 V434" fill="none" stroke="#111" stroke-width="1.500"/>
<polygon points="489,417 498,412.500 507,417 498,421.500" fill="#d8a8ff"/>
<polygon points="489,417 498,421.500 498,437 489,432" fill="#b060f0"/>
<polygon points="498,421.500 507,417 507,432 498,437" fill="#8428c8"/>
<path d="M507 419 l4 -2 v13 l-4 2z" fill="#a040e0"/>
</g>
<g>
<rect x="489" y="455.500" width="21" height="21" fill="#f8b4c0" stroke="#d05870" stroke-width="1.200"/>
<rect x="491" y="457.500" width="17" height="17" fill="#fcd0d8" opacity=".7"/>
<path d="M499.500 451 V462 M499.500 470 V481.500 M484.500 466 H495.500 M503.500 466 H514.500" stroke="#e01818" stroke-width="1.400"/><circle cx="499.500" cy="466" r="1.500" fill="#e01818"/>
</g>
<g>
<path d="M489.500 502 L496.500 502 L496.500 519 L489.500 519Z" fill="url(#cyl)" transform="skewX(-6) translate(52 0)"/>
<rect x="489" y="502.500" width="7.500" height="17" fill="url(#cyl)"/>
<path d="M489 516 L496.500 506" stroke="#e8f4ff" stroke-width="1.400"/>
<polygon points="490,500.500 494,497 497,501.500" fill="#d8e020"/>
<rect x="503" y="496" width="9" height="15" fill="url(#cyl)"/>
<rect x="499.500" y="507" width="7" height="7" fill="#f8a818"/><circle cx="503" cy="510.500" r="1.600" fill="#d02020"/>
</g>
<g>
<path d="M486 537 h10 l2 2 v12 h-12z" fill="#f4f6f8" stroke="#222" stroke-width="1.200"/>
<g fill="#3a6a5a"><rect x="488" y="540" width="2" height="2"/><rect x="492" y="540" width="2" height="2"/><rect x="488" y="544" width="2" height="2"/><rect x="492" y="544" width="2" height="2"/></g>
<path d="M493.500 546.500 h15 q2 0 2 2 v10 q0 2 -2 2 h-13 q-2 0 -2 -2z" fill="#f8fafa" stroke="#222" stroke-width="1.300"/>
<g fill="#2a8a7a"><rect x="496.500" y="550" width="3" height="2"/><rect x="501" y="550" width="3" height="2"/><rect x="505.500" y="550" width="3" height="2"/><rect x="496.500" y="553.500" width="3" height="2"/><rect x="501" y="553.500" width="3" height="2"/><rect x="505.500" y="553.500" width="3" height="2"/><rect x="496.500" y="557" width="3" height="2"/><rect x="501" y="557" width="3" height="2"/><rect x="505.500" y="557" width="3" height="2"/></g>
<path d="M505 535 l1.300 4 l4 -2 l-2 4 l4 1.300 l-4 1.300 l2 4 l-4 -2 l-1.300 4 l-1.300 -4 l-4 2 l2 -4 l-4 -1.300 l4 -1.300 l-2 -4 l4 2z" fill="#e8e040" stroke="#a8a020" stroke-width=".5"/>
</g>
<g>
<rect x="484" y="571.500" width="31" height="32" fill="#d4d8e0" opacity=".8"/>
<rect x="487" y="578" width="25" height="24" rx="2" fill="#4888e8" stroke="#2858b8" stroke-width="1"/>
<path d="M487 590 h25 M487 596 h25 M493 588 v14 M499.500 588 v14 M506 588 v14" stroke="#c8dcff" stroke-width="1"/>
<polygon points="489,576 505,574 508,577 508,590 492,592 489,589" fill="#e8dca0" stroke="#a89858" stroke-width=".8"/>
<polygon points="492,580 505,578.500 505,587 492,588.500" fill="#d0e8d8"/>
<circle cx="487.500" cy="580" r="2.600" fill="#e02828"/><circle cx="490.500" cy="581" r="1.800" fill="#c01818"/>
</g>
<g>
<rect x="489.500" y="618" width="5.500" height="21" fill="#3a58d8"/><path d="M489.500 621 l5.500 3 M489.500 626 l5.500 3 M489.500 631 l5.500 3 M489.500 636 l5.500 3" stroke="#a8b8ff" stroke-width="1"/>
<path d="M497 628 L513 624 L510 627.500 L496 631Z" fill="#f4f4f4" stroke="#444" stroke-width=".8"/>
<path d="M497 634 L509 631 L506 634.500 L495 637.500Z" fill="#e8e8e8" stroke="#444" stroke-width=".8"/>
<path d="M492 637 l2 4 l4 -1 l-2.500 3 l3 3 l-4.500 -.5 l-1.500 4 l-1.500 -4 l-4.500 .5 l3 -3 l-2.500 -3 l4 1z" fill="#e8e040" stroke="#a8a020" stroke-width=".5"/>
</g>
<circle cx="497.700" cy="671.500" r="11.500" fill="none" stroke="#2a2a2a" stroke-width="2"/>
<g>
<path d="M487 701 L502 717 M502 701 L486 718" stroke="#222" stroke-width="2.200" stroke-linecap="round"/>
<path d="M484.500 722 H505 M484.500 720 v4 M505 720 v4" stroke="#444" stroke-width=".9"/>
<path d="M509.500 699 V718 M507.500 699 h4 M507.500 718 h4" stroke="#444" stroke-width=".9"/>
<text x="493" y="729" font-family="Liberation Sans, sans-serif" font-size="6" font-weight="bold" fill="#d02020">x</text>
<text x="512" y="711" font-family="Liberation Sans, sans-serif" font-size="6" font-weight="bold" fill="#d02020">x</text>
</g>
<g>
<polygon points="484,754 484,759 498,766.500 514,756 514,751 498,761.500" fill="#111"/>
<polygon points="484,754 500,739 514,751 498,761.500" fill="#f8e020"/>
<polygon points="487.500,755.600 503.200,741.700 506.400,744.500 491,757.700" fill="#f89818"/>
<polygon points="491,757.700 506.400,744.500 509.600,747.200 494.500,759.700" fill="#e01818"/>
<polygon points="494.500,759.700 509.600,747.200 512,749.300 497,761" fill="#f8a020"/>
</g>
<path d="M484 778.500 H514" stroke="#fafafa" stroke-width="1.500"/><path d="M484 777.500 H514" stroke="#c4c4c4" stroke-width="1"/>
<polygon points="488,979 493,975 493,983" fill="#111"/>
</svg><svg id="vp" width="1400" height="848" viewBox="520 142 1400 848" style="position:absolute;left:520px;top:142px;display:block">
<defs>
<linearGradient id="gbg" x1="0" y1="142" x2="0" y2="990" gradientUnits="userSpaceOnUse"><stop offset="0" stop-color="#b2b6b7"/><stop offset="1" stop-color="#fafdfe"/></linearGradient>
<linearGradient id="gband" x1="520" y1="0" x2="1090" y2="0" gradientUnits="userSpaceOnUse"><stop offset="0" stop-color="#842c5b"/><stop offset="0.2" stop-color="#8f3165"/><stop offset="0.45" stop-color="#913367"/><stop offset="0.7" stop-color="#812b59"/><stop offset="1" stop-color="#72264d"/></linearGradient>
<linearGradient id="gpinkL" x1="700" y1="300" x2="560" y2="990" gradientUnits="userSpaceOnUse"><stop offset="0" stop-color="#c74387"/><stop offset="0.33" stop-color="#cb498b"/><stop offset="0.47" stop-color="#d45898"/><stop offset="0.61" stop-color="#d95e9c"/><stop offset="0.75" stop-color="#d05896"/><stop offset="0.82" stop-color="#bd4e88"/><stop offset="0.89" stop-color="#ac4478"/><stop offset="1" stop-color="#9a396a"/></linearGradient>
<linearGradient id="gpinkR" x1="1500" y1="440" x2="1440" y2="700" gradientUnits="userSpaceOnUse"><stop offset="0" stop-color="#a43f78"/><stop offset="0.25" stop-color="#c34285"/><stop offset="1" stop-color="#c94589"/></linearGradient>
<linearGradient id="gpinkR2" x1="0" y1="700" x2="0" y2="990" gradientUnits="userSpaceOnUse"><stop offset="0" stop-color="#c94589" stop-opacity="0"/><stop offset="0.8" stop-color="#db64a0" stop-opacity="1"/></linearGradient>
<linearGradient id="gyel" x1="0" y1="470" x2="0" y2="990" gradientUnits="userSpaceOnUse"><stop offset="0" stop-color="#ffbd53"/><stop offset="0.2" stop-color="#ffc65a"/><stop offset="0.55" stop-color="#ffcc60"/><stop offset="1" stop-color="#ffd066"/></linearGradient>
<radialGradient id="gyel2" cx="1370" cy="975" r="300" gradientUnits="userSpaceOnUse" gradientTransform="translate(1370 975) rotate(56) scale(1.5 0.62) translate(-1370 -975)"><stop offset="0" stop-color="#ffe57e" stop-opacity="1"/><stop offset="0.45" stop-color="#ffe078" stop-opacity=".7"/><stop offset="1" stop-color="#ffd86c" stop-opacity="0"/></radialGradient>
<linearGradient id="gyel3" x1="900" y1="640" x2="1040" y2="544" gradientUnits="userSpaceOnUse"><stop offset="0" stop-color="#ffdb6c" stop-opacity="1"/><stop offset="0.5" stop-color="#ffd768" stop-opacity=".6"/><stop offset="1" stop-color="#ffd060" stop-opacity="0"/></linearGradient>
<linearGradient id="gyel4" x1="0" y1="470" x2="0" y2="640" gradientUnits="userSpaceOnUse"><stop offset="0" stop-color="#ffb850" stop-opacity=".8"/><stop offset="1" stop-color="#ffc258" stop-opacity="0"/></linearGradient>
<linearGradient id="gred" x1="1060" y1="400" x2="1540" y2="760" gradientUnits="userSpaceOnUse"><stop offset="0" stop-color="#aa4a3a"/><stop offset="0.4" stop-color="#933a30"/><stop offset="0.65" stop-color="#7d302a"/><stop offset="1" stop-color="#6a2822"/></linearGradient>
</defs>
<rect x="520" y="142" width="1400" height="848" fill="url(#gbg)"/>
<path d="M1089.0 354.5 C1107.5 358.9 1141.5 366.9 1200.0 380.6 C1258.5 394.4 1359.4 418.1 1440.0 437.0 C1520.6 455.9 1603.8 475.2 1683.8 494.2 C1763.8 513.2 1880.6 541.5 1920.0 551.0 L1920 990 L1100 990 Z" fill="url(#gpinkR)"/>
<path d="M1089.0 354.5 C1107.5 358.9 1141.5 366.9 1200.0 380.6 C1258.5 394.4 1359.4 418.1 1440.0 437.0 C1520.6 455.9 1603.8 475.2 1683.8 494.2 C1763.8 513.2 1880.6 541.5 1920.0 551.0 L1920 990 L1100 990 Z" fill="url(#gpinkR2)"/>
<path d="M520.0 221.2 C536.7 225.6 586.7 238.1 620.0 247.5 C653.3 256.9 689.6 268.6 720.0 277.5 C750.4 286.4 773.3 293.9 802.5 301.0 C831.7 308.1 868.8 314.8 895.0 320.0 C921.2 325.2 927.7 326.2 960.0 332.0 C992.3 337.8 1067.5 350.8 1089.0 354.5 L1038.3 510.6 C1029.6 510.0 1003.4 508.4 986.0 506.8 C968.7 505.2 951.4 503.3 934.1 501.0 C916.8 498.8 899.6 496.2 882.4 493.2 C865.3 490.3 848.1 487.1 831.1 483.5 C814.0 479.9 788.5 473.7 780.0 471.7 C778.9 470.5 781.2 474.4 773.3 464.5 C765.4 454.6 743.5 425.8 732.5 412.5 C721.5 399.2 715.8 393.8 707.5 385.0 C699.2 376.2 690.0 366.2 682.5 360.0 C675.0 353.8 670.8 351.2 662.5 347.5 C654.2 343.8 643.8 340.8 632.5 337.5 C621.2 334.2 607.5 332.1 595.0 327.5 C582.5 322.9 570.0 316.7 557.5 310.0 C545.0 303.3 526.2 291.2 520.0 287.5 Z" fill="url(#gband)" stroke="#3d1c3a" stroke-width="0.8"/>
<path d="M802.5 301 L773.3 464.5 M808 302.5 L803.3 474" stroke="#3a2a4c" stroke-width="0.9" fill="none"/>
<path d="M520.0 287.5 C526.2 291.2 545.0 303.3 557.5 310.0 C570.0 316.7 582.5 322.9 595.0 327.5 C607.5 332.1 621.2 334.2 632.5 337.5 C643.8 340.8 654.2 343.8 662.5 347.5 C670.8 351.2 675.0 353.8 682.5 360.0 C690.0 366.2 699.2 376.2 707.5 385.0 C715.8 393.8 721.5 399.2 732.5 412.5 C743.5 425.8 765.4 454.6 773.3 464.5 C781.2 474.4 778.9 470.5 780.0 471.7 C786.8 481.1 807.2 509.3 820.7 528.2 C834.2 547.1 847.7 566.0 861.1 584.9 C874.5 603.9 887.9 622.9 901.2 641.9 C914.5 660.9 927.8 680.0 941.0 699.1 C954.2 718.2 967.3 737.4 980.4 756.6 C993.5 775.7 1006.5 795.0 1019.5 814.2 C1032.5 833.5 1045.5 852.8 1058.3 872.2 C1071.2 891.5 1084.1 910.9 1096.8 930.3 C1109.6 949.8 1128.4 978.6 1135.0 988.8 C1141.6 998.9 1136.2 990.6 1136.5 991.0 L520 991 Z" fill="url(#gpinkL)" stroke="#4a2038" stroke-width="0.8"/>
<path d="M780.0 471.7 C788.5 473.7 814.0 479.9 831.1 483.5 C848.1 487.1 865.3 490.3 882.4 493.2 C899.6 496.2 916.8 498.8 934.1 501.0 C951.4 503.3 968.7 505.2 986.0 506.8 C1003.4 508.4 1029.6 510.0 1038.3 510.6 C1045.1 511.5 1065.7 514.0 1079.3 516.3 C1092.9 518.6 1106.4 521.3 1119.8 524.4 C1133.2 527.5 1146.5 531.1 1159.6 535.0 C1172.8 539.0 1185.8 543.4 1198.7 548.1 C1211.6 552.8 1224.4 557.9 1237.0 563.4 C1249.6 568.9 1262.0 574.7 1274.3 580.8 C1286.6 586.9 1298.7 593.4 1310.7 600.2 C1322.7 606.9 1334.5 614.0 1346.1 621.3 C1357.8 628.6 1369.3 636.2 1380.6 644.0 C1391.9 651.8 1403.1 659.9 1414.1 668.1 C1425.1 676.4 1436.0 684.8 1446.7 693.4 C1457.5 702.1 1468.1 710.9 1478.6 719.8 C1489.1 728.7 1499.4 737.8 1509.7 747.0 C1519.9 756.1 1530.1 765.4 1540.2 774.7 C1550.3 784.0 1565.2 798.1 1570.2 802.8 C1572.3 805.8 1578.7 814.9 1583.0 821.0 C1587.2 827.1 1591.4 833.2 1595.6 839.3 C1599.8 845.4 1604.0 851.5 1608.2 857.6 C1612.4 863.7 1616.6 869.8 1620.8 876.0 C1625.0 882.1 1629.1 888.3 1633.3 894.4 C1637.5 900.6 1641.6 906.8 1645.7 913.0 C1649.9 919.2 1654.0 925.5 1658.1 931.7 C1662.3 938.0 1666.4 944.3 1670.5 950.6 C1674.6 956.9 1678.7 963.3 1682.8 969.7 C1686.9 976.1 1692.7 985.4 1695.0 989.0 C1697.3 992.6 1696.1 990.7 1696.3 991.0 L1136.5 991 C1136.2 990.6 1141.6 998.9 1135.0 988.8 C1128.4 978.6 1109.6 949.8 1096.8 930.3 C1084.1 910.9 1071.2 891.5 1058.3 872.2 C1045.5 852.8 1032.5 833.5 1019.5 814.2 C1006.5 795.0 993.5 775.7 980.4 756.6 C967.3 737.4 954.2 718.2 941.0 699.1 C927.8 680.0 914.5 660.9 901.2 641.9 C887.9 622.9 874.5 603.9 861.1 584.9 C847.7 566.0 834.2 547.1 820.7 528.2 C807.2 509.3 786.8 481.1 780.0 471.7 Z" fill="url(#gyel)"/>
<path d="M780.0 471.7 C788.5 473.7 814.0 479.9 831.1 483.5 C848.1 487.1 865.3 490.3 882.4 493.2 C899.6 496.2 916.8 498.8 934.1 501.0 C951.4 503.3 968.7 505.2 986.0 506.8 C1003.4 508.4 1029.6 510.0 1038.3 510.6 C1045.1 511.5 1065.7 514.0 1079.3 516.3 C1092.9 518.6 1106.4 521.3 1119.8 524.4 C1133.2 527.5 1146.5 531.1 1159.6 535.0 C1172.8 539.0 1185.8 543.4 1198.7 548.1 C1211.6 552.8 1224.4 557.9 1237.0 563.4 C1249.6 568.9 1262.0 574.7 1274.3 580.8 C1286.6 586.9 1298.7 593.4 1310.7 600.2 C1322.7 606.9 1334.5 614.0 1346.1 621.3 C1357.8 628.6 1369.3 636.2 1380.6 644.0 C1391.9 651.8 1403.1 659.9 1414.1 668.1 C1425.1 676.4 1436.0 684.8 1446.7 693.4 C1457.5 702.1 1468.1 710.9 1478.6 719.8 C1489.1 728.7 1499.4 737.8 1509.7 747.0 C1519.9 756.1 1530.1 765.4 1540.2 774.7 C1550.3 784.0 1565.2 798.1 1570.2 802.8 C1572.3 805.8 1578.7 814.9 1583.0 821.0 C1587.2 827.1 1591.4 833.2 1595.6 839.3 C1599.8 845.4 1604.0 851.5 1608.2 857.6 C1612.4 863.7 1616.6 869.8 1620.8 876.0 C1625.0 882.1 1629.1 888.3 1633.3 894.4 C1637.5 900.6 1641.6 906.8 1645.7 913.0 C1649.9 919.2 1654.0 925.5 1658.1 931.7 C1662.3 938.0 1666.4 944.3 1670.5 950.6 C1674.6 956.9 1678.7 963.3 1682.8 969.7 C1686.9 976.1 1692.7 985.4 1695.0 989.0 C1697.3 992.6 1696.1 990.7 1696.3 991.0 L1136.5 991 C1136.2 990.6 1141.6 998.9 1135.0 988.8 C1128.4 978.6 1109.6 949.8 1096.8 930.3 C1084.1 910.9 1071.2 891.5 1058.3 872.2 C1045.5 852.8 1032.5 833.5 1019.5 814.2 C1006.5 795.0 993.5 775.7 980.4 756.6 C967.3 737.4 954.2 718.2 941.0 699.1 C927.8 680.0 914.5 660.9 901.2 641.9 C887.9 622.9 874.5 603.9 861.1 584.9 C847.7 566.0 834.2 547.1 820.7 528.2 C807.2 509.3 786.8 481.1 780.0 471.7 Z" fill="url(#gyel3)"/>
<path d="M780.0 471.7 C788.5 473.7 814.0 479.9 831.1 483.5 C848.1 487.1 865.3 490.3 882.4 493.2 C899.6 496.2 916.8 498.8 934.1 501.0 C951.4 503.3 968.7 505.2 986.0 506.8 C1003.4 508.4 1029.6 510.0 1038.3 510.6 C1045.1 511.5 1065.7 514.0 1079.3 516.3 C1092.9 518.6 1106.4 521.3 1119.8 524.4 C1133.2 527.5 1146.5 531.1 1159.6 535.0 C1172.8 539.0 1185.8 543.4 1198.7 548.1 C1211.6 552.8 1224.4 557.9 1237.0 563.4 C1249.6 568.9 1262.0 574.7 1274.3 580.8 C1286.6 586.9 1298.7 593.4 1310.7 600.2 C1322.7 606.9 1334.5 614.0 1346.1 621.3 C1357.8 628.6 1369.3 636.2 1380.6 644.0 C1391.9 651.8 1403.1 659.9 1414.1 668.1 C1425.1 676.4 1436.0 684.8 1446.7 693.4 C1457.5 702.1 1468.1 710.9 1478.6 719.8 C1489.1 728.7 1499.4 737.8 1509.7 747.0 C1519.9 756.1 1530.1 765.4 1540.2 774.7 C1550.3 784.0 1565.2 798.1 1570.2 802.8 C1572.3 805.8 1578.7 814.9 1583.0 821.0 C1587.2 827.1 1591.4 833.2 1595.6 839.3 C1599.8 845.4 1604.0 851.5 1608.2 857.6 C1612.4 863.7 1616.6 869.8 1620.8 876.0 C1625.0 882.1 1629.1 888.3 1633.3 894.4 C1637.5 900.6 1641.6 906.8 1645.7 913.0 C1649.9 919.2 1654.0 925.5 1658.1 931.7 C1662.3 938.0 1666.4 944.3 1670.5 950.6 C1674.6 956.9 1678.7 963.3 1682.8 969.7 C1686.9 976.1 1692.7 985.4 1695.0 989.0 C1697.3 992.6 1696.1 990.7 1696.3 991.0 L1136.5 991 C1136.2 990.6 1141.6 998.9 1135.0 988.8 C1128.4 978.6 1109.6 949.8 1096.8 930.3 C1084.1 910.9 1071.2 891.5 1058.3 872.2 C1045.5 852.8 1032.5 833.5 1019.5 814.2 C1006.5 795.0 993.5 775.7 980.4 756.6 C967.3 737.4 954.2 718.2 941.0 699.1 C927.8 680.0 914.5 660.9 901.2 641.9 C887.9 622.9 874.5 603.9 861.1 584.9 C847.7 566.0 834.2 547.1 820.7 528.2 C807.2 509.3 786.8 481.1 780.0 471.7 Z" fill="url(#gyel2)"/>
<path d="M780.0 471.7 C788.5 473.7 814.0 479.9 831.1 483.5 C848.1 487.1 865.3 490.3 882.4 493.2 C899.6 496.2 916.8 498.8 934.1 501.0 C951.4 503.3 968.7 505.2 986.0 506.8 C1003.4 508.4 1029.6 510.0 1038.3 510.6 C1045.1 511.5 1065.7 514.0 1079.3 516.3 C1092.9 518.6 1106.4 521.3 1119.8 524.4 C1133.2 527.5 1146.5 531.1 1159.6 535.0 C1172.8 539.0 1185.8 543.4 1198.7 548.1 C1211.6 552.8 1224.4 557.9 1237.0 563.4 C1249.6 568.9 1262.0 574.7 1274.3 580.8 C1286.6 586.9 1298.7 593.4 1310.7 600.2 C1322.7 606.9 1334.5 614.0 1346.1 621.3 C1357.8 628.6 1369.3 636.2 1380.6 644.0 C1391.9 651.8 1403.1 659.9 1414.1 668.1 C1425.1 676.4 1436.0 684.8 1446.7 693.4 C1457.5 702.1 1468.1 710.9 1478.6 719.8 C1489.1 728.7 1499.4 737.8 1509.7 747.0 C1519.9 756.1 1530.1 765.4 1540.2 774.7 C1550.3 784.0 1565.2 798.1 1570.2 802.8 C1572.3 805.8 1578.7 814.9 1583.0 821.0 C1587.2 827.1 1591.4 833.2 1595.6 839.3 C1599.8 845.4 1604.0 851.5 1608.2 857.6 C1612.4 863.7 1616.6 869.8 1620.8 876.0 C1625.0 882.1 1629.1 888.3 1633.3 894.4 C1637.5 900.6 1641.6 906.8 1645.7 913.0 C1649.9 919.2 1654.0 925.5 1658.1 931.7 C1662.3 938.0 1666.4 944.3 1670.5 950.6 C1674.6 956.9 1678.7 963.3 1682.8 969.7 C1686.9 976.1 1692.7 985.4 1695.0 989.0 C1697.3 992.6 1696.1 990.7 1696.3 991.0 L1136.5 991 C1136.2 990.6 1141.6 998.9 1135.0 988.8 C1128.4 978.6 1109.6 949.8 1096.8 930.3 C1084.1 910.9 1071.2 891.5 1058.3 872.2 C1045.5 852.8 1032.5 833.5 1019.5 814.2 C1006.5 795.0 993.5 775.7 980.4 756.6 C967.3 737.4 954.2 718.2 941.0 699.1 C927.8 680.0 914.5 660.9 901.2 641.9 C887.9 622.9 874.5 603.9 861.1 584.9 C847.7 566.0 834.2 547.1 820.7 528.2 C807.2 509.3 786.8 481.1 780.0 471.7 Z" fill="url(#gyel4)"/>
<path d="M780.0 471.7 C788.5 473.7 814.0 479.9 831.1 483.5 C848.1 487.1 865.3 490.3 882.4 493.2 C899.6 496.2 916.8 498.8 934.1 501.0 C951.4 503.3 968.7 505.2 986.0 506.8 C1003.4 508.4 1029.6 510.0 1038.3 510.6 C1030.2 511.1 1011.9 512.0 990.0 513.3 C968.1 514.6 934.8 516.4 906.7 518.3 C878.7 520.2 835.9 523.5 821.7 524.6 Z" fill="#ffb24c"/>
<path d="M821.7 524.6 C835.9 523.5 878.7 520.2 906.7 518.3 C934.8 516.4 968.1 514.6 990.0 513.3 C1011.9 512.0 1030.2 511.1 1038.3 510.6" fill="none" stroke="#f08a3c" stroke-width="0.8"/>
<path d="M780.0 471.7 C786.8 481.1 807.2 509.3 820.7 528.2 C834.2 547.1 847.7 566.0 861.1 584.9 C874.5 603.9 887.9 622.9 901.2 641.9 C914.5 660.9 927.8 680.0 941.0 699.1 C954.2 718.2 967.3 737.4 980.4 756.6 C993.5 775.7 1006.5 795.0 1019.5 814.2 C1032.5 833.5 1045.5 852.8 1058.3 872.2 C1071.2 891.5 1084.1 910.9 1096.8 930.3 C1109.6 949.8 1128.4 978.6 1135.0 988.8 C1141.6 998.9 1136.2 990.6 1136.5 991.0" fill="none" stroke="#4a2a20" stroke-width="0.9"/>
<path d="M1089.0 354.5 C1092.7 355.4 1104.1 357.9 1111.5 359.9 C1118.8 361.9 1126.1 364.1 1133.2 366.6 C1140.3 369.0 1147.3 371.6 1154.2 374.5 C1161.1 377.3 1167.9 380.3 1174.6 383.5 C1181.3 386.7 1187.9 390.1 1194.4 393.6 C1200.9 397.2 1207.2 400.9 1213.5 404.7 C1219.8 408.6 1226.0 412.5 1232.2 416.7 C1238.3 420.8 1244.3 425.0 1250.3 429.4 C1256.2 433.8 1262.1 438.3 1267.9 442.9 C1273.7 447.5 1279.4 452.2 1285.0 457.1 C1290.7 461.9 1296.3 466.8 1301.8 471.8 C1307.3 476.8 1312.7 481.9 1318.1 487.1 C1323.5 492.2 1328.8 497.5 1334.1 502.8 C1339.3 508.1 1344.5 513.5 1349.7 519.0 C1354.8 524.4 1359.9 530.0 1365.0 535.5 C1370.1 541.1 1375.1 546.7 1380.0 552.4 C1385.0 558.0 1389.9 563.7 1394.8 569.5 C1399.6 575.2 1404.5 581.0 1409.3 586.8 C1414.0 592.6 1418.8 598.5 1423.5 604.3 C1428.2 610.2 1432.9 616.1 1437.6 622.0 C1442.2 628.0 1446.9 633.9 1451.5 639.9 C1456.1 645.8 1460.6 651.8 1465.2 657.8 C1469.7 663.8 1474.2 669.8 1478.7 675.8 C1483.2 681.8 1487.7 687.8 1492.1 693.8 C1496.5 699.9 1501.0 705.9 1505.4 711.9 C1509.8 718.0 1514.2 724.0 1518.5 730.1 C1522.9 736.1 1527.2 742.2 1531.6 748.2 C1535.9 754.3 1540.2 760.3 1544.5 766.4 C1548.9 772.5 1553.1 778.5 1557.4 784.6 C1561.7 790.6 1568.1 799.8 1570.2 802.8 C1565.2 798.1 1550.3 784.0 1540.2 774.7 C1530.1 765.4 1519.9 756.1 1509.7 747.0 C1499.4 737.8 1489.1 728.7 1478.6 719.8 C1468.1 710.9 1457.5 702.1 1446.7 693.4 C1436.0 684.8 1425.1 676.4 1414.1 668.1 C1403.1 659.9 1391.9 651.8 1380.6 644.0 C1369.3 636.2 1357.8 628.6 1346.1 621.3 C1334.5 614.0 1322.7 606.9 1310.7 600.2 C1298.7 593.4 1286.6 586.9 1274.3 580.8 C1262.0 574.7 1249.6 568.9 1237.0 563.4 C1224.4 557.9 1211.6 552.8 1198.7 548.1 C1185.8 543.4 1172.8 539.0 1159.6 535.0 C1146.5 531.1 1133.2 527.5 1119.8 524.4 C1106.4 521.3 1092.9 518.6 1079.3 516.3 C1065.7 514.0 1045.1 511.5 1038.3 510.6 Z" fill="url(#gred)"/>
<path d="M1038.3 510.6 C1045.1 511.5 1065.7 514.0 1079.3 516.3 C1092.9 518.6 1106.4 521.3 1119.8 524.4 C1133.2 527.5 1146.5 531.1 1159.6 535.0 C1172.8 539.0 1185.8 543.4 1198.7 548.1 C1211.6 552.8 1224.4 557.9 1237.0 563.4 C1249.6 568.9 1262.0 574.7 1274.3 580.8 C1286.6 586.9 1298.7 593.4 1310.7 600.2 C1322.7 606.9 1334.5 614.0 1346.1 621.3 C1357.8 628.6 1369.3 636.2 1380.6 644.0 C1391.9 651.8 1403.1 659.9 1414.1 668.1 C1425.1 676.4 1436.0 684.8 1446.7 693.4 C1457.5 702.1 1468.1 710.9 1478.6 719.8 C1489.1 728.7 1499.4 737.8 1509.7 747.0 C1519.9 756.1 1530.1 765.4 1540.2 774.7 C1550.3 784.0 1565.2 798.1 1570.2 802.8" fill="none" stroke="#c65a38" stroke-width="0.9"/>
<path d="M1038.3 510.6 L1089.0 354.5 C1092.7 355.4 1104.1 357.9 1111.5 359.9 C1118.8 361.9 1126.1 364.1 1133.2 366.6 C1140.3 369.0 1147.3 371.6 1154.2 374.5 C1161.1 377.3 1167.9 380.3 1174.6 383.5 C1181.3 386.7 1187.9 390.1 1194.4 393.6 C1200.9 397.2 1207.2 400.9 1213.5 404.7 C1219.8 408.6 1226.0 412.5 1232.2 416.7 C1238.3 420.8 1244.3 425.0 1250.3 429.4 C1256.2 433.8 1262.1 438.3 1267.9 442.9 C1273.7 447.5 1279.4 452.2 1285.0 457.1 C1290.7 461.9 1296.3 466.8 1301.8 471.8 C1307.3 476.8 1312.7 481.9 1318.1 487.1 C1323.5 492.2 1328.8 497.5 1334.1 502.8 C1339.3 508.1 1344.5 513.5 1349.7 519.0 C1354.8 524.4 1359.9 530.0 1365.0 535.5 C1370.1 541.1 1375.1 546.7 1380.0 552.4 C1385.0 558.0 1389.9 563.7 1394.8 569.5 C1399.6 575.2 1404.5 581.0 1409.3 586.8 C1414.0 592.6 1418.8 598.5 1423.5 604.3 C1428.2 610.2 1432.9 616.1 1437.6 622.0 C1442.2 628.0 1446.9 633.9 1451.5 639.9 C1456.1 645.8 1460.6 651.8 1465.2 657.8 C1469.7 663.8 1474.2 669.8 1478.7 675.8 C1483.2 681.8 1487.7 687.8 1492.1 693.8 C1496.5 699.9 1501.0 705.9 1505.4 711.9 C1509.8 718.0 1514.2 724.0 1518.5 730.1 C1522.9 736.1 1527.2 742.2 1531.6 748.2 C1535.9 754.3 1540.2 760.3 1544.5 766.4 C1548.9 772.5 1553.1 778.5 1557.4 784.6 C1561.7 790.6 1568.1 799.8 1570.2 802.8" fill="none" stroke="#ee5a3c" stroke-width="1.3" stroke-linejoin="round"/>
<path d="M1570.2 802.8 C1572.3 805.8 1578.7 814.9 1583.0 821.0 C1587.2 827.1 1591.4 833.2 1595.6 839.3 C1599.8 845.4 1604.0 851.5 1608.2 857.6 C1612.4 863.7 1616.6 869.8 1620.8 876.0 C1625.0 882.1 1629.1 888.3 1633.3 894.4 C1637.5 900.6 1641.6 906.8 1645.7 913.0 C1649.9 919.2 1654.0 925.5 1658.1 931.7 C1662.3 938.0 1666.4 944.3 1670.5 950.6 C1674.6 956.9 1678.7 963.3 1682.8 969.7 C1686.9 976.1 1692.7 985.4 1695.0 989.0 C1697.3 992.6 1696.1 990.7 1696.3 991.0" fill="none" stroke="#e8502f" stroke-width="1.2"/>
<path d="M521 494.5 H796" stroke="#8f8a92" stroke-width="1" fill="none"/>
<path d="M796 494.5 H890" stroke="#5c5840" stroke-width="1" fill="none"/>
<path d="M890 494.5 H1043" stroke="#b9acb6" stroke-width="1" fill="none"/>
<path d="M1043 494.5 H1118 M1220 494.5 H1325" stroke="#c4a49c" stroke-width="1" fill="none"/>
<path d="M1325 494.5 H1684" stroke="#948c96" stroke-width="1" fill="none"/>
<path d="M1684 494.5 H1918" stroke="#5d6163" stroke-width="1" fill="none"/>
<path d="M1188.5 142 V391" stroke="#5d6163" stroke-width="1" fill="none"/>
<path d="M1188.5 391 V461.5 M1188.5 526 V543" stroke="#d4bcb8" stroke-width="1" fill="none"/>
<path d="M1188.5 543 V990" stroke="#56523c" stroke-width="1" fill="none"/>
<radialGradient id="gcur" cx="1143" cy="479" r="30" gradientUnits="userSpaceOnUse"><stop offset="0" stop-color="#a64805" stop-opacity=".97"/><stop offset="0.8" stop-color="#a84a07" stop-opacity=".95"/><stop offset="0.93" stop-color="#a84a14" stop-opacity=".5"/><stop offset="1" stop-color="#a04020" stop-opacity="0"/></radialGradient>
<circle cx="1143" cy="479" r="30" fill="url(#gcur)"/>
<path d="M1118 494.500 H1156" stroke="#b89a20" stroke-width="1" opacity=".8"/>
<circle cx="1143" cy="479" r="16.700" fill="none" stroke="#000" stroke-width="3.400" stroke-dasharray="15.200 11.030" stroke-dashoffset="-5.500"/>
<circle cx="1143" cy="479" r="16.400" fill="none" stroke="#fff" stroke-width="1.900" stroke-dasharray="14.200 11.560" stroke-dashoffset="-5.900"/>
<path d="M1119.500 479 H1166.500 M1143 455.500 V502.500" stroke="#000" stroke-width="4.200"/>
<path d="M1120.500 479 H1165.500 M1143 456.500 V501.500" stroke="#fff" stroke-width="2.200"/>
<g>
<polygon points="565.6,880 589.3,884.8 595.2,894 589.3,917 562.6,913.3 555.9,903.7" fill="#cdb9c1" opacity="0.93"/>
<path d="M563 912.500 L588 920.500" stroke="#e84848" stroke-width="1.600"/><polygon points="546.500,911 560,909 559,916" fill="#e04040"/>
<path d="M588.500 921 L597 898" stroke="#3a5cff" stroke-width="1.800"/><polygon points="604.500,880.500 602,902 593.500,898.500" fill="#2a50f0"/>
<path d="M587 919.500 L580 908" stroke="#1e7a2a" stroke-width="3.600"/><polygon points="575.500,901 585,908.500 577.500,913" fill="#1a7026"/>
<circle cx="588" cy="922" r="3.600" fill="#e6e2e4"/>
<text x="601.500" y="880" font-family="Liberation Sans, sans-serif" font-size="9" fill="#3a50ff">Z</text>
<text x="572" y="902" font-family="Liberation Sans, sans-serif" font-size="9" fill="#5a7a5a">Y</text>
<text x="537" y="911" font-family="Liberation Sans, sans-serif" font-size="8" fill="#e04858" opacity=".8">X</text>
</g>
<rect x="520" y="142" width="1.5" height="848" fill="#d8d8dc"/>
<rect x="1918.800" y="142" width="1.200" height="848" fill="#f4f0f4" opacity="0.45"/>
</svg><div id="status" class="abs"></div>
<div class="abs" style="left:1826px;top:992px;width:1px;height:27px;background:#c2c2c2;box-shadow:1px 0 0 #f6f6f6"></div>
<div class="abs" style="left:1903px;top:992px;width:1px;height:27px;background:#c2c2c2;box-shadow:1px 0 0 #f6f6f6"></div>
<svg class="abs" style="left:1848px;top:996px" width="18" height="18" viewBox="0 0 18 18"><path d="M2 6 V2 H6 M12 2 H16 V6 M16 12 V16 H12 M6 16 H2 V12" fill="none" stroke="#777" stroke-width="1.200"/><rect x="5" y="5" width="8" height="8" fill="#e8eef8" stroke="#3a5a8a" stroke-width="1.200"/><rect x="5" y="5" width="8" height="2.500" fill="#3a5a8a"/></svg>
<div id="stattext" class="abs">面 / 体(0)</div>
<div id="taskbar" class="abs"></div>
<div class="abs" style="left:226px;top:1020px;width:73px;height:60px;background:#8b201c"></div>
<div class="abs ul" style="left:82px;width:61px"></div>
<div class="abs ul" style="left:157px;width:61px"></div>
<div class="abs ul" style="left:226px;width:73px"></div>
<svg class="abs" style="left:0;top:1020px" width="320" height="60" viewBox="0 1020 320 60">
<defs><radialGradient id="nxg2" cx="0.4" cy="0.35" r="0.7"><stop offset="0" stop-color="#9fe8ff"/><stop offset="0.5" stop-color="#1f7fd8"/><stop offset="1" stop-color="#0b3c8c"/></radialGradient></defs>
<!-- windows -->
<g fill="#fff"><polygon points="24,1042 34.500,1040.500 34.500,1049.500 24,1049.500"/><polygon points="36,1040.300 48,1038.500 48,1049.500 36,1049.500"/><polygon points="24,1051 34.500,1051 34.500,1060 24,1058.500"/><polygon points="36,1051 48,1051 48,1062 36,1060.300"/></g>
<!-- folder -->
<g><path d="M96 1039 H106 L108.500 1042 H128 V1062 H96Z" fill="#f8d870"/><path d="M96 1044 H128 V1062 H96Z" fill="#fce690"/><path d="M101 1062 V1053 H123 V1062 H118.500 V1057 H105.500 V1062Z" fill="#3aa8e0"/><rect x="101" y="1051" width="22" height="3" fill="#58c0f0"/></g>
<!-- pinwheel -->
<g transform="translate(186 1049)">
<path d="M0 0 Q5.3 -11.2 16.0 -9.2 A18.5 18.5 0 0 1 16.0 9.2 Q12.3 -1.0 0 0Z" fill="#f03222"/>
<path d="M0 0 Q12.3 -1.0 16.0 9.2 A18.5 18.5 0 0 1 0.0 18.5 Q7.0 10.2 0 0Z" fill="#f8d21e"/>
<path d="M0 0 Q7.0 10.2 0.0 18.5 A18.5 18.5 0 0 1 -16.0 9.3 Q-5.3 11.2 0 0Z" fill="#8ed02a"/>
<path d="M0 0 Q-5.3 11.2 -16.0 9.2 A18.5 18.5 0 0 1 -16.0 -9.3 Q-12.3 1.0 0 0Z" fill="#2ec46a"/>
<path d="M0 0 Q-12.3 1.0 -16.0 -9.3 A18.5 18.5 0 0 1 -0.0 -18.5 Q-7.0 -10.2 0 0Z" fill="#3f86ee"/>
<path d="M0 0 Q-7.0 -10.2 -0.0 -18.5 A18.5 18.5 0 0 1 16.0 -9.3 Q5.3 -11.2 0 0Z" fill="#a63cf0"/>
<circle r="2.6" fill="#fff"/></g>
<!-- nx -->
<g transform="translate(243 1031) scale(1.35)"><circle cx="14" cy="17" r="9.500" fill="url(#nxg2)"/><path d="M9 19 C12 14 18 12 22 13 C19 17 14 22 9 19Z" fill="#3fae3f" opacity=".85"/><polygon points="6,5 16,3 13,16" fill="#e0203a"/><polygon points="6,5 11,8 13,16" fill="#a01028"/><path d="M4 25 C12 28 24 22 25 11" fill="none" stroke="#e8a020" stroke-width="2.400" stroke-linecap="round"/><polygon points="1,24 8,21.500 7,28.500" fill="#e8a020"/></g>
</svg>
<!-- tray -->
<svg class="abs" style="left:1680px;top:1020px" width="240" height="60" viewBox="1680 1020 240 60">
<path d="M1690 1054 L1699 1044.500 L1708 1054" fill="none" stroke="#fff" stroke-width="1.600"/>
<g><ellipse cx="1734.500" cy="1051" rx="6.500" ry="8" fill="#111"/><ellipse cx="1734.500" cy="1054" rx="4" ry="4.500" fill="#fff"/><circle cx="1734.500" cy="1044.500" r="4.500" fill="#111"/><path d="M1728 1050 Q1734.500 1053 1741 1050 L1741 1052 Q1734.500 1055 1728 1052Z" fill="#e02020"/><ellipse cx="1731" cy="1059" rx="2.500" ry="1.200" fill="#f0a020"/><ellipse cx="1738" cy="1059" rx="2.500" ry="1.200" fill="#f0a020"/><circle cx="1733" cy="1043.500" r="1" fill="#fff"/><circle cx="1736" cy="1043.500" r="1" fill="#fff"/></g>
<g fill="none" stroke="#fff" stroke-width="1.300"><path d="M1763 1041.500 H1782.500 V1055.500 H1763 V1049"/><path d="M1766 1058.500 H1776 M1771 1055.500 V1058.500 M1763 1055.500 V1058.500"/><rect x="1759.500" y="1041.500" width="6.500" height="7.500" fill="#47100d"/><path d="M1762 1044 h2" stroke-width="1"/></g>
<g fill="none" stroke="#fff" stroke-width="1.400"><path d="M1797 1046.500 H1800.500 L1805.500 1042 V1058 L1800.500 1053.500 H1797Z"/><path d="M1808.500 1046.500 Q1811 1050 1808.500 1053.500"/><path d="M1811.500 1044 Q1816 1050 1811.500 1056" opacity=".6"/></g>
<text x="1831.500" y="1057" font-family="Liberation Sans, Noto Sans CJK SC, sans-serif" font-size="20" fill="#fff">中</text>
<g transform="rotate(-12 1884 1050)"><rect x="1873" y="1039" width="22" height="22" rx="4.500" fill="#f06a28"/><text x="1877.500" y="1057.500" font-family="Liberation Sans, sans-serif" font-weight="bold" font-style="italic" font-size="21" fill="#fff">S</text></g>
<rect x="1913" y="1020" width="1" height="60" fill="#8a6a68"/>
</svg>
<!-- IME bar -->
<div class="abs" style="left:1188px;top:984px;width:274px;height:38px;background:#fff;border:1px solid #d8e0ea"></div>
<svg class="abs" style="left:1145px;top:975px" width="320" height="52" viewBox="1145 975 320 52">
<g transform="rotate(-12 1172 1001)"><rect x="1153" y="982" width="38" height="38" rx="6" fill="#f0601c"/><path d="M1182 992 C1176 988 1163 989 1163 996 C1163 1003 1182 1000 1182 1007 C1182 1014 1167 1014 1161 1010" fill="none" stroke="#fff" stroke-width="6" stroke-linecap="round"/></g>
<text x="1201" y="1011" font-family="Liberation Sans, Noto Sans CJK SC, sans-serif" font-weight="bold" font-size="22" fill="#2878c8">中</text>
<circle cx="1240" cy="998.500" r="2.200" fill="none" stroke="#2878c8" stroke-width="1.600"/><path d="M1250 1004 c2.500 0 3 3.500 -1 6" fill="none" stroke="#2878c8" stroke-width="2.600" stroke-linecap="round"/>
<g fill="none" stroke="#2878c8" stroke-width="2"><circle cx="1278" cy="1003" r="10.500"/><path d="M1272.500 1006 Q1278 1011.500 1283.500 1006"/><path d="M1274.500 998 v3 M1281.500 998 v3" stroke-linecap="round"/></g>
<g><rect x="1307" y="992" width="8.500" height="15" rx="4.200" fill="#2878c8"/><path d="M1304 1002 C1304 1011.500 1318.500 1011.500 1318.500 1002 M1311.200 1009 V1014 M1307 1014.500 H1315.500" fill="none" stroke="#2878c8" stroke-width="1.800"/></g>
<g><rect x="1333" y="995" width="23" height="16" rx="2.500" fill="#2878c8"/><g fill="#fff"><rect x="1336" y="998" width="2.400" height="2.400"/><rect x="1340" y="998" width="2.400" height="2.400"/><rect x="1344" y="998" width="2.400" height="2.400"/><rect x="1348" y="998" width="2.400" height="2.400"/><rect x="1351.500" y="998" width="2" height="2.400"/><rect x="1336" y="1002" width="2.400" height="2.400"/><rect x="1340" y="1002" width="2.400" height="2.400"/><rect x="1344" y="1002" width="2.400" height="2.400"/><rect x="1348" y="1002" width="2.400" height="2.400"/><rect x="1339" y="1006.500" width="11" height="2"/></g></g>
<g fill="#c4c8ce"><circle cx="1377" cy="997" r="4.200"/><path d="M1369 1012 C1369 1002 1385 1002 1385 1008 V1012Z"/><rect x="1379" y="1005" width="14" height="9" fill="#b4b8be"/><text x="1380.500" y="1013" font-family="Liberation Sans, sans-serif" font-weight="bold" font-size="9" fill="#fff">13</text></g>
<path d="M1405 994 L1401 997 L1404 1001.500 L1406 1000.500 V1012 H1416.500 V1000.500 L1418.500 1001.500 L1421.500 997 L1417.500 994 C1415 996.500 1407.500 996.500 1405 994Z" fill="#2878c8"/>
<g transform="rotate(45 1444 1004)"><path d="M1441 994 V999.500 Q1444 1001.500 1447 999.500 V994 Q1451 996 1451 1000.500 Q1451 1004.500 1446.700 1006 V1017 Q1444 1019.500 1441.300 1017 V1006 Q1437 1004.500 1437 1000.500 Q1437 996 1441 994Z" fill="#2878c8"/></g>
</svg>
</body>
</html>
